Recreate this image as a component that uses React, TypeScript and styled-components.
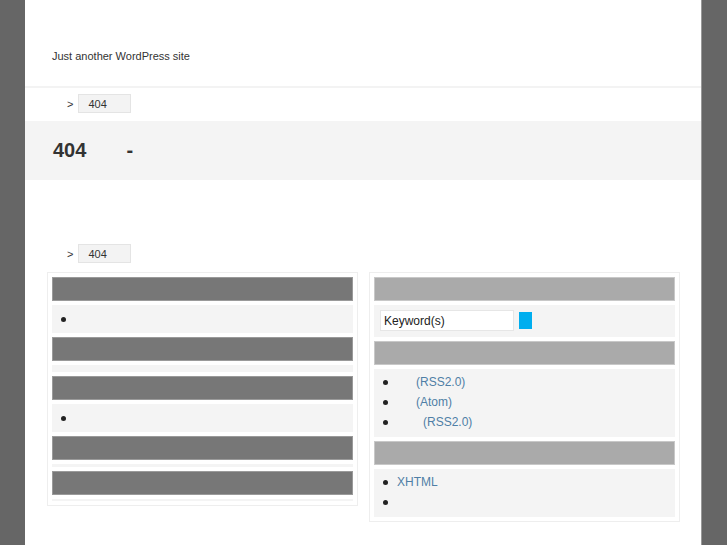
import styled, { createGlobalStyle } from 'styled-components';

const GlobalStyle = createGlobalStyle`
  html, body {
    margin: 0;
    padding: 0;
    background: #666;
  }
  body {
    font-family: "Liberation Sans", Arial, sans-serif;
    color: #333;
  }
`;

const Page = styled.div`
  width: 676px;
  min-height: 545px;
  margin-left: 25px;
  background: #fff;
  border-right: 1px solid #999;
`;

const Header = styled.header`
  height: 88px;
  border-bottom: 2px solid #f3f3f3;
  display: flex;
  align-items: flex-start;
  padding: 50px 0 0 27px;
  box-sizing: border-box;
  font-size: 11px;
  color: #333;
`;

const Crumbs = styled.div<{ $top: number }>`
  display: flex;
  align-items: center;
  gap: 5px;
  margin-top: ${(p) => p.$top}px;
  padding-left: 42px;
  font-size: 11px;
  color: #333;
  height: 19px;
`;

const CrumbBox = styled.span`
  width: 53px;
  height: 19px;
  box-sizing: border-box;
  border: 1px solid #e4e4e4;
  background: #f3f3f3;
  padding-left: 9px;
  display: flex;
  align-items: center;
`;

const TitleBand = styled.div`
  margin-top: 8px;
  height: 59px;
  background: #f4f4f4;
  display: flex;
  align-items: center;
  padding-left: 28px;
  gap: 40px;
  font-size: 20px;
  font-weight: bold;
  color: #333;
`;

const Columns = styled.div`
  display: flex;
  align-items: flex-start;
  gap: 11px;
  margin: 9px 0 0 22px;
`;

const SideBox = styled.div`
  width: 311px;
  box-sizing: border-box;
  border: 1px solid #eee;
  padding: 4px;
  display: flex;
  flex-direction: column;
  gap: 4px;
`;

const WidgetTitle = styled.div<{ $light?: boolean }>`
  height: 24px;
  box-sizing: border-box;
  background: ${(p) => (p.$light ? '#aaa' : '#777')};
  border: 1px solid ${(p) => (p.$light ? '#c8c8c8' : '#9a9a9a')};
`;

const WidgetBody = styled.div<{ $h: number }>`
  height: ${(p) => p.$h}px;
  background: #f4f4f4;
  box-sizing: border-box;
  overflow: hidden;
`;

const List = styled.ul<{ $pad: number }>`
  margin: 0;
  padding: ${(p) => p.$pad}px 0 0 9px;
  font-size: 12px;
  line-height: 20px;
  list-style: none;

  li {
    display: flex;
    align-items: center;
    gap: 9px;
    height: 20px;
  }

  li::before {
    content: '';
    width: 5px;
    height: 5px;
    border-radius: 50%;
    background: #222;
    flex: none;
  }
`;

const Link = styled.a<{ $indent: number }>`
  color: #4f7fa6;
  text-decoration: none;
  margin-left: ${(p) => p.$indent}px;
`;

const SearchRow = styled.div`
  display: flex;
  align-items: center;
  gap: 5px;
  padding: 5px 0 0 6px;
`;

const SearchInput = styled.div`
  width: 134px;
  height: 21px;
  box-sizing: border-box;
  background: #fff;
  border: 1px solid #e6e6e6;
  font-size: 12px;
  color: #222;
  display: flex;
  align-items: center;
  padding-left: 3px;
`;

const SearchButton = styled.span`
  width: 13px;
  height: 17px;
  background: #00aeef;
`;

export default function App() {
  return (
    <>
      <GlobalStyle />
      <Page>
        <Header>Just another WordPress site</Header>
        <Crumbs $top={6}>
          <span>&gt;</span>
          <CrumbBox>404</CrumbBox>
        </Crumbs>
        <TitleBand>
          <span>404</span>
          <span>-</span>
        </TitleBand>
        <Crumbs $top={64}>
          <span>&gt;</span>
          <CrumbBox>404</CrumbBox>
        </Crumbs>
        <Columns>
          <SideBox>
            <WidgetTitle />
            <WidgetBody $h={28}>
              <List $pad={4}>
                <li />
              </List>
            </WidgetBody>
            <WidgetTitle />
            <WidgetBody $h={7} />
            <WidgetTitle />
            <WidgetBody $h={28}>
              <List $pad={4}>
                <li />
              </List>
            </WidgetBody>
            <WidgetTitle />
            <WidgetBody $h={3} />
            <WidgetTitle />
            <WidgetBody $h={2} />
          </SideBox>
          <SideBox>
            <WidgetTitle $light />
            <WidgetBody $h={32}>
              <SearchRow>
                <SearchInput>Keyword(s)</SearchInput>
                <SearchButton />
              </SearchRow>
            </WidgetBody>
            <WidgetTitle $light />
            <WidgetBody $h={68}>
              <List $pad={3}>
                <li>
                  <Link $indent={19}>(RSS2.0)</Link>
                </li>
                <li>
                  <Link $indent={19}>(Atom)</Link>
                </li>
                <li>
                  <Link $indent={26}>(RSS2.0)</Link>
                </li>
              </List>
            </WidgetBody>
            <WidgetTitle $light />
            <WidgetBody $h={48}>
              <List $pad={3}>
                <li>
                  <Link $indent={0}>XHTML</Link>
                </li>
                <li />
              </List>
            </WidgetBody>
          </SideBox>
        </Columns>
      </Page>
    </>
  );
}
